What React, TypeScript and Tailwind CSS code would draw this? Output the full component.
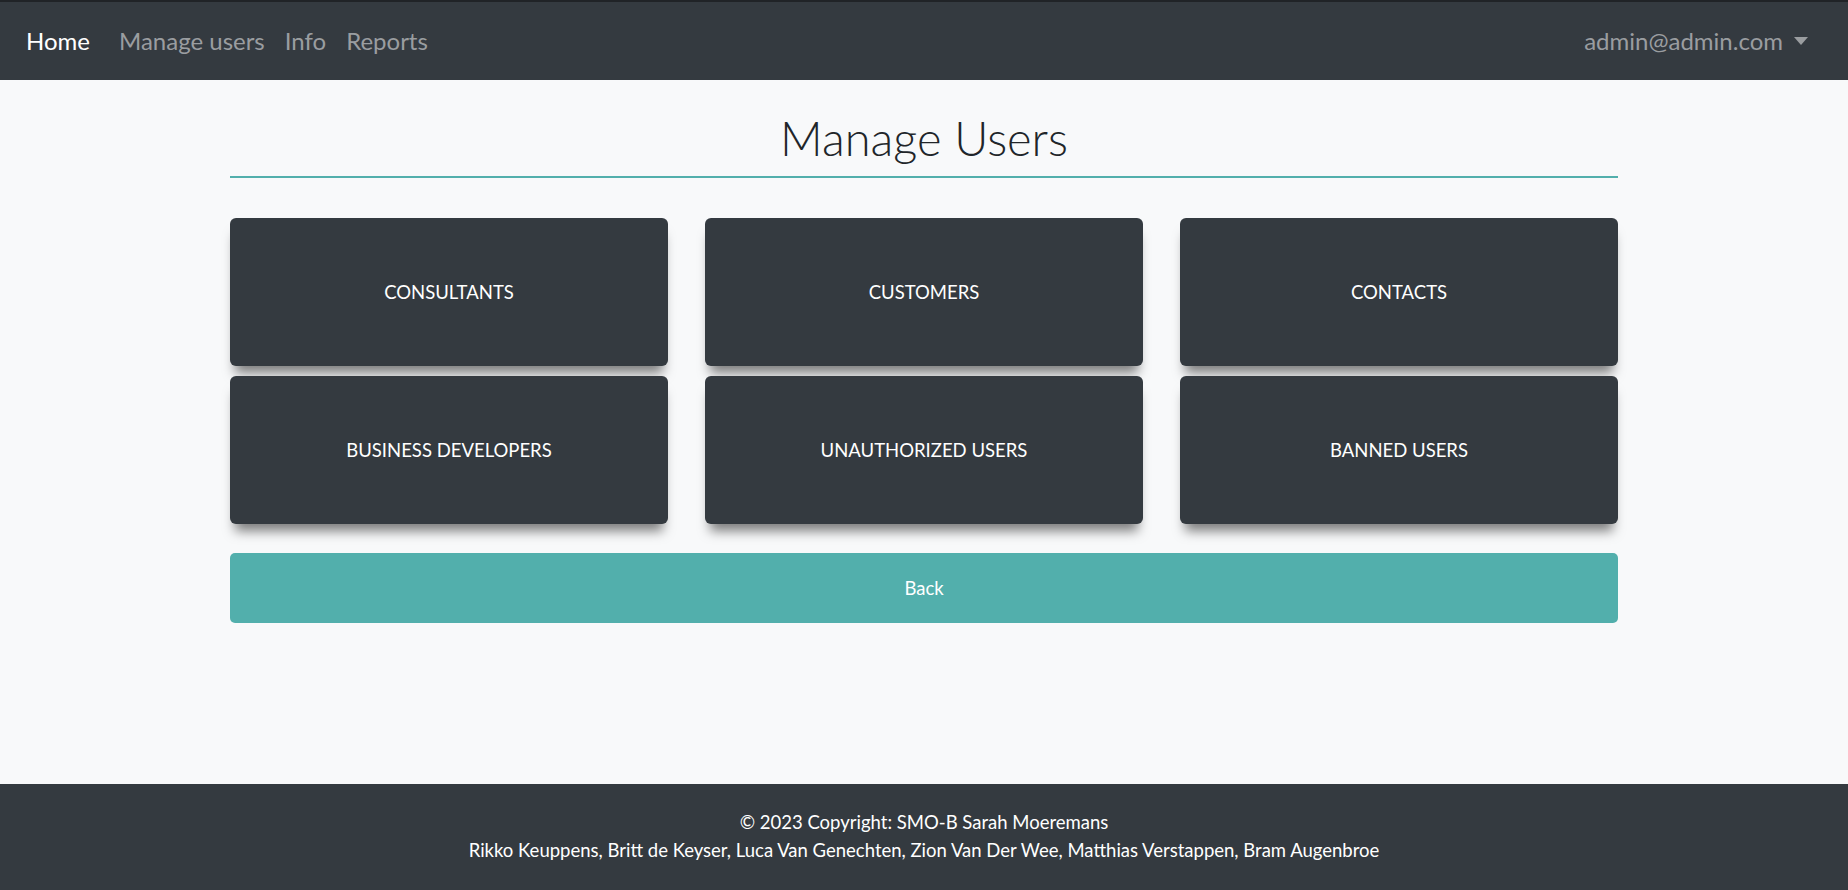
import React from "react";

const CATEGORIES = [
  "CONSULTANTS",
  "CUSTOMERS",
  "CONTACTS",
  "BUSINESS DEVELOPERS",
  "UNAUTHORIZED USERS",
  "BANNED USERS",
];

const FONT = "font-['Lato','Noto_Sans',sans-serif]";

export default function App() {
  return (
    <div className={`flex min-h-screen flex-col bg-[#f8f9fa] ${FONT}`}>
      {/* Navbar */}
      <nav className="flex h-[80px] items-center justify-between border-t-2 border-[#202327] bg-[#343a40] pl-[26px] pr-[40px]">
        <div className="flex items-center">
          <a className="mr-[19px] text-[24px] text-white">Home</a>
          <a className="px-[10px] text-[24px] text-[#9a9da0]">Manage users</a>
          <a className="px-[10px] text-[24px] text-[#9a9da0]">Info</a>
          <a className="px-[10px] text-[24px] text-[#9a9da0]">Reports</a>
        </div>
        <div className="flex items-center gap-[11px] text-[24px] text-[#9a9da0]">
          <span>admin@admin.com</span>
          <svg width="14" height="8" viewBox="0 0 14 8">
            <path d="M0 0 L14 0 L7 8 Z" fill="#9a9da0" />
          </svg>
        </div>
      </nav>

      {/* Content */}
      <main className="flex-1">
        <div className="mx-auto w-[1388px] pt-[30px]">
          <h1 className="border-b-2 border-[#52afac] pb-[10px] text-center text-[47px] font-light leading-[1.2] text-[#212529]">
            Manage Users
          </h1>

          <div className="mt-[40px] grid grid-cols-3 gap-x-[37px] gap-y-[10px]">
            {CATEGORIES.map((c) => (
              <button
                key={c}
                className="flex h-[148px] items-center justify-center rounded-[6px] bg-[#343a40] text-[18.5px] text-white shadow-[0_12px_12px_-5px_rgba(0,0,0,0.5)]"
              >
                {c}
              </button>
            ))}
          </div>

          <button className="mt-[29px] flex h-[70px] w-full items-center justify-center rounded-[5px] bg-[#52afac] text-[18.5px] text-white">
            Back
          </button>
        </div>
      </main>

      {/* Footer */}
      <footer className="flex h-[106px] flex-col items-center justify-center bg-[#343a40] pb-[2px] text-[18.5px] leading-[28px] text-white">
        <p>© 2023 Copyright: SMO-B Sarah Moeremans</p>
        <p>
          Rikko Keuppens, Britt de Keyser, Luca Van Genechten, Zion Van Der Wee,
          Matthias Verstappen, Bram Augenbroe
        </p>
      </footer>
    </div>
  );
}
